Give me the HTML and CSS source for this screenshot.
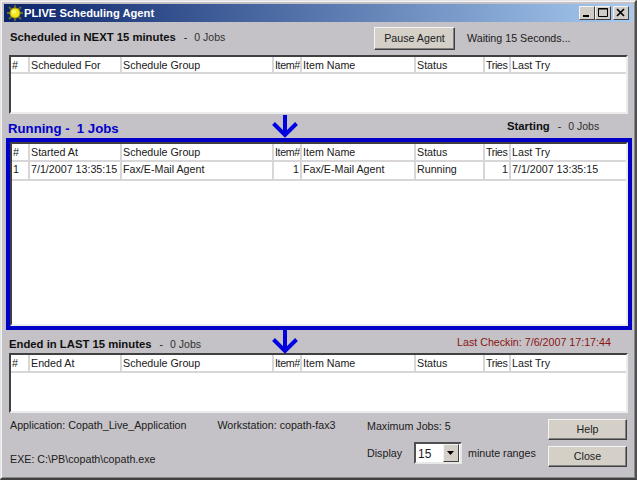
FILE: index.html
```html
<!DOCTYPE html>
<html lang="en">
<head>
<meta charset="utf-8">
<title>PLIVE Scheduling Agent</title>
<link rel="stylesheet" href="styles.css">
</head>
<body>
<div class="window">
  <div class="titlebar">
    <svg class="sun" width="16" height="16" viewBox="0 0 16 16">
      <g stroke="#6a6a30" stroke-width="1.8">
        <path d="M8 0v16M0 8h16M2 2l12 12M14 2l-12 12"/>
      </g>
      <circle cx="8" cy="8" r="5" fill="#f4e81c" stroke="#a89a10" stroke-width="1"/>
      <circle cx="7" cy="7" r="2" fill="#fcf870"/>
    </svg>
    <span class="title-text">PLIVE Scheduling Agent</span>
    <div class="caption-btns">
      <span class="cap-btn"><svg width="14" height="12" viewBox="0 0 14 12"><rect x="3" y="8" width="6" height="2"/></svg></span>
      <span class="cap-btn"><svg width="14" height="12" viewBox="0 0 14 12"><path d="M2.500 1.500h9v8h-9z M2 2h10" fill="none" stroke="#000"/></svg></span>
      <span class="cap-btn cap-close"><svg width="14" height="12" viewBox="0 0 14 12"><path d="M3 2l7 7M10 2l-7 7" fill="none" stroke="#000" stroke-width="1.700"/></svg></span>
    </div>
  </div>

  <div class="head head-top">
    <b class="lbl">Scheduled in NEXT 15 minutes</b><span class="dash">-</span><span class="jobs">0 Jobs</span>
    <button class="btn btn-pause" type="button">Pause Agent</button>
    <span class="waiting">Waiting 15 Seconds...</span>
  </div>

  <div class="grid grid-top">
    <table>
      <colgroup><col class="c1"><col class="c2"><col class="c3"><col class="c4"><col class="c5"><col class="c6"><col class="c7"><col class="c8"></colgroup>
      <thead><tr><th>#</th><th>Scheduled For</th><th>Schedule Group</th><th class="tight">Item#</th><th>Item Name</th><th>Status</th><th class="tight">Tries</th><th>Last Try</th></tr></thead>
    </table>
  </div>

  <div class="head head-running">
    <b class="running">Running -&nbsp; 1 Jobs</b>
    <svg class="arrow" width="28" height="24" viewBox="0 0 28 24"><path d="M14 1v20M2.500 9.500l11.500 11.500 11.500-11.500" fill="none" stroke="#0000e0" stroke-width="4"/></svg>
    <span class="starting"><b class="lbl">Starting</b><span class="dash">-</span><span class="jobs">0 Jobs</span></span>
  </div>

  <div class="runbox">
    <div class="grid grid-tall">
      <table>
        <colgroup><col class="c1b"><col class="c2"><col class="c3"><col class="c4"><col class="c5"><col class="c6"><col class="c7"><col class="c8"></colgroup>
        <thead><tr><th>#</th><th>Started At</th><th>Schedule Group</th><th class="tight">Item#</th><th>Item Name</th><th>Status</th><th class="tight">Tries</th><th>Last Try</th></tr></thead>
        <tbody><tr><td>1</td><td>7/1/2007 13:35:15</td><td>Fax/E-Mail Agent</td><td class="num">1</td><td>Fax/E-Mail Agent</td><td>Running</td><td class="num">1</td><td>7/1/2007 13:35:15</td></tr></tbody>
      </table>
    </div>
  </div>

  <div class="head head-ended">
    <b class="lbl">Ended in LAST 15 minutes</b><span class="dash">-</span><span class="jobs">0 Jobs</span>
    <svg class="arrow" width="28" height="24" viewBox="0 0 28 24"><path d="M14 0v21M2.500 9.500l11.500 11.500 11.500-11.500" fill="none" stroke="#0000e0" stroke-width="4"/></svg>
    <span class="checkin">Last Checkin: 7/6/2007 17:17:44</span>
  </div>

  <div class="grid grid-bottom">
    <table>
      <colgroup><col class="c1"><col class="c2"><col class="c3"><col class="c4"><col class="c5"><col class="c6"><col class="c7"><col class="c8"></colgroup>
      <thead><tr><th>#</th><th>Ended At</th><th>Schedule Group</th><th class="tight">Item#</th><th>Item Name</th><th>Status</th><th class="tight">Tries</th><th>Last Try</th></tr></thead>
    </table>
  </div>

  <div class="footer">
    <div class="info">
      <div class="info-top">
        <span class="app">Application: Copath_Live_Application</span>
        <span class="wks">Workstation: copath-fax3</span>
      </div>
      <div>EXE: C:\PB\copath\copath.exe</div>
    </div>
    <div class="opts">
      <div>Maximum Jobs: 5</div>
      <div class="display">
        <span>Display</span>
        <span class="combo"><span class="combo-val">15</span><span class="combo-btn"><svg width="8" height="4" viewBox="0 0 8 4"><path d="M0 0h7L3.500 4z"/></svg></span></span>
        <span class="ranges">minute ranges</span>
      </div>
    </div>
    <div class="actions">
      <button class="btn btn-side" type="button">Help</button>
      <button class="btn btn-side" type="button">Close</button>
    </div>
  </div>
</div>
</body>
</html>
```

FILE: styles.css
```css
* { box-sizing: border-box; }
html, body { margin: 0; padding: 0; }
body {
  width: 637px;
  height: 480px;
  overflow: hidden;
  font-family: "Liberation Sans", Arial, sans-serif;
  font-size: 10.7px;
  color: #202020;
}
.window {
  width: 637px;
  height: 480px;
  background: #c4c2c6;
  border-top: 1px solid #e4e2e4;
  border-left: 1px solid #e4e2e4;
  border-right: 2px solid #505050;
  border-bottom: 2px solid #404040;
  box-shadow: inset 1px 1px 0 #f4f4f4, inset -1px -1px 0 #888;
  display: flex;
  flex-direction: column;
  padding: 3px 2px 0 3px;
}
.titlebar {
  height: 18px;
  flex: none;
  background: linear-gradient(90deg, #0a246a, #a6caf0);
  color: #fff;
  display: flex;
  align-items: center;
  padding: 0 4px 0 3px;
}
.sun { margin-right: 1px; flex: none; }
.title-text { font-weight: bold; font-size: 11.2px; flex: 1; }
.caption-btns { display: flex; }
.cap-btn {
  width: 16px;
  height: 14px;
  background: #d0cdc6;
  border: 1px solid;
  border-color: #f4f4f4 #404040 #404040 #f4f4f4;
  display: flex;
  align-items: center;
  justify-content: center;
}
.cap-close { margin-left: 2px; }
.head { position: relative; flex: none; display: flex; margin: 0 -2px 0 0; }
.head-top { height: 33px; align-items: center; padding: 0 0 3px 6px; }
.head-running { height: 24px; padding: 7px 0 0 4px; }
.head-ended { height: 23px; padding: 8px 0 0 5px; }
.lbl { font-weight: bold; font-size: 11.3px; color: #101010; }
.dash { margin: 0 7px 0 8px; }
.jobs { color: #303030; font-size: 10.5px; }
.btn {
  font: 10.7px "Liberation Sans", Arial, sans-serif;
  color: #202020;
  background: #d4d0c8;
  border: 1px solid;
  border-color: #f4f4f4 #404040 #404040 #f4f4f4;
  box-shadow: inset -1px -1px 0 #808080;
  padding: 0 0 1px;
}
.btn-pause { position: absolute; left: 370px; top: 5px; width: 81px; height: 23px; }
.waiting { position: absolute; left: 463px; top: 10px; }
.grid {
  flex: none;
  margin-left: 5px;
  width: 619px;
  background: #fff;
  border: 2px solid;
  border-color: #404040 #ececec #ececec #404040;
  overflow: hidden;
}
.grid-top { height: 59px; }
.grid-bottom { height: 60px; }
.grid-tall { height: 184px; margin: 0; width: 618px; }
table { border-collapse: collapse; table-layout: fixed; width: 100%; }
th, td {
  font-weight: normal;
  font-size: 10.7px;
  text-align: left;
  padding: 0 0 0 1px;
  white-space: nowrap;
  overflow: hidden;
  color: #202020;
  border-right: 2px solid #d8d6d8;
  border-bottom: 2px solid #d8d6d8;
}
th { height: 17px; }
.grid-top th { height: 16px; }
td { height: 19px; padding-bottom: 3px; }
th:last-child, td:last-child { border-right: 0; }
.tight { letter-spacing: -0.4px; }
td.num { text-align: right; padding: 0 1px 3px 0; }
.c1 { width: 18px; }
.c1b { width: 17px; }
.c2 { width: 92px; }
.c3 { width: 152px; }
.c4 { width: 28px; }
.c5 { width: 114px; }
.c6 { width: 69px; }
.c7 { width: 26px; }
.running { color: #0000c8; font-size: 13.2px; }
.arrow { position: absolute; left: 267px; top: 0; }
.starting { position: absolute; left: 503px; top: 6px; }
.runbox {
  flex: none;
  margin-left: 2px;
  width: 626px;
  height: 192px;
  border: 4px solid #0000c8;
}
.checkin { position: absolute; left: 453px; top: 6px; color: #8c1414; }
.footer { flex: 1; position: relative; display: flex; }
.info { width: 358px; padding: 6px 0 0 6px; display: flex; flex-direction: column; gap: 22px; }
.info-top { display: flex; gap: 31px; }
.opts { width: 180px; padding: 7px 0 0 5px; display: flex; flex-direction: column; gap: 10px; }
.display { display: flex; align-items: center; gap: 12px; }
.ranges { white-space: nowrap; margin-left: -6px; }
.combo {
  width: 48px;
  height: 22px;
  flex: none;
  background: #fff;
  border: 2px solid;
  border-color: #505050 #e8e8e8 #e8e8e8 #505050;
  display: flex;
  justify-content: space-between;
  padding-right: 1px;
}
.combo-val { padding: 3px 0 0 2px; font-size: 12px; }
.combo-btn {
  width: 16px;
  background: #d4d0c8;
  border: 1px solid;
  border-color: #f4f4f4 #404040 #404040 #f4f4f4;
  display: flex;
  align-items: center;
  justify-content: center;
}
.actions { display: flex; flex-direction: column; gap: 6px; padding: 6px 0 0 6px; }
.btn-side { width: 79px; height: 21px; }
```
